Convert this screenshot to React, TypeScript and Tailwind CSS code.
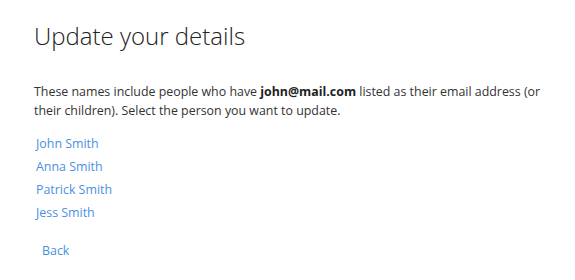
export default function App() {
  const names = ["John Smith", "Anna Smith", "Patrick Smith", "Jess Smith"];
  return (
    <div className="min-h-screen bg-white pl-[34px] pr-4 pt-[20px] text-[#333]" style={{ fontFamily: '"Open Sans", "Noto Sans", sans-serif' }}>
      <h1 className="text-[24px] font-light leading-[32px] text-[#222]">Update your details</h1>
      <p className="mt-[30px] max-w-[512px] text-[12.4px] leading-[19px] text-[#333]">
        These names include people who have <b className="font-bold text-[#222]">john@mail.com</b> listed as their email address (or their children). Select the person you want to update.
      </p>
      <ul className="mt-[12px] flex flex-col pl-[2px]">
        {names.map((n) => (
          <li key={n} className="text-[12.4px] leading-[23px]">
            <a href="#" className="text-[#4a90e2]">{n}</a>
          </li>
        ))}
      </ul>
      <div className="mt-[15px] pl-[8px] text-[12.4px] leading-[23px]">
        <a href="#" className="text-[#4a90e2]">Back</a>
      </div>
    </div>
  );
}
